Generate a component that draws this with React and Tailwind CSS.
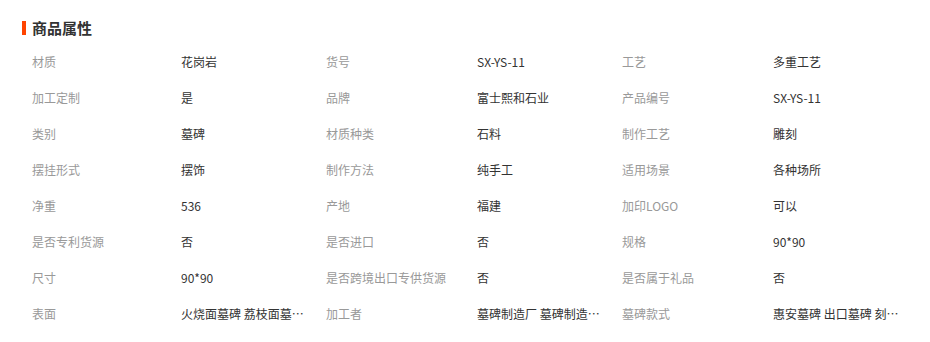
import React from "react";

const rows = [
  ["材质", "花岗岩", "货号", "SX-YS-11", "工艺", "多重工艺"],
  ["加工定制", "是", "品牌", "富士熙和石业", "产品编号", "SX-YS-11"],
  ["类别", "墓碑", "材质种类", "石料", "制作工艺", "雕刻"],
  ["摆挂形式", "摆饰", "制作方法", "纯手工", "适用场景", "各种场所"],
  ["净重", "536", "产地", "福建", "加印LOGO", "可以"],
  ["是否专利货源", "否", "是否进口", "否", "规格", "90*90"],
  ["尺寸", "90*90", "是否跨境出口专供货源", "否", "是否属于礼品", "否"],
  ["表面", "火烧面墓碑 荔枝面墓碑 光面墓碑", "加工者", "墓碑制造厂 墓碑制造商 墓碑加工厂", "墓碑款式", "惠安墓碑 出口墓碑 刻字墓碑"],
];

function Cell({ label, value, lw }) {
  return (
    <div className="flex items-center">
      <div className={`${lw} shrink-0 whitespace-nowrap text-[#999999]`}>{label}</div>
      <div className="w-[145px] shrink-0">
        <div className="w-[126px] truncate text-[#333333]">{value}</div>
      </div>
    </div>
  );
}

export default function App() {
  return (
    <div
      className="w-[930px] h-[342px] bg-white text-[12px]"
      style={{ fontFamily: '"Microsoft YaHei", "Noto Sans CJK SC", "Noto Sans", sans-serif' }}
    >
      <div className="flex items-center pl-[22px] pt-[20px] h-[36px]">
        <div className="w-[4px] h-[14px] bg-[#ff4400]" />
        <div className="ml-[6px] text-[15px] font-bold leading-[16px] text-[#333333]">商品属性</div>
      </div>
      <div className="mt-[8px] pl-[32px]">
        {rows.map((r, i) => (
          <div key={i} className="flex h-[36px] items-center">
            <Cell label={r[0]} value={r[1]} lw="w-[149px]" />
            <Cell label={r[2]} value={r[3]} lw="w-[151px]" />
            <Cell label={r[4]} value={r[5]} lw="w-[151px]" />
          </div>
        ))}
      </div>
    </div>
  );
}
